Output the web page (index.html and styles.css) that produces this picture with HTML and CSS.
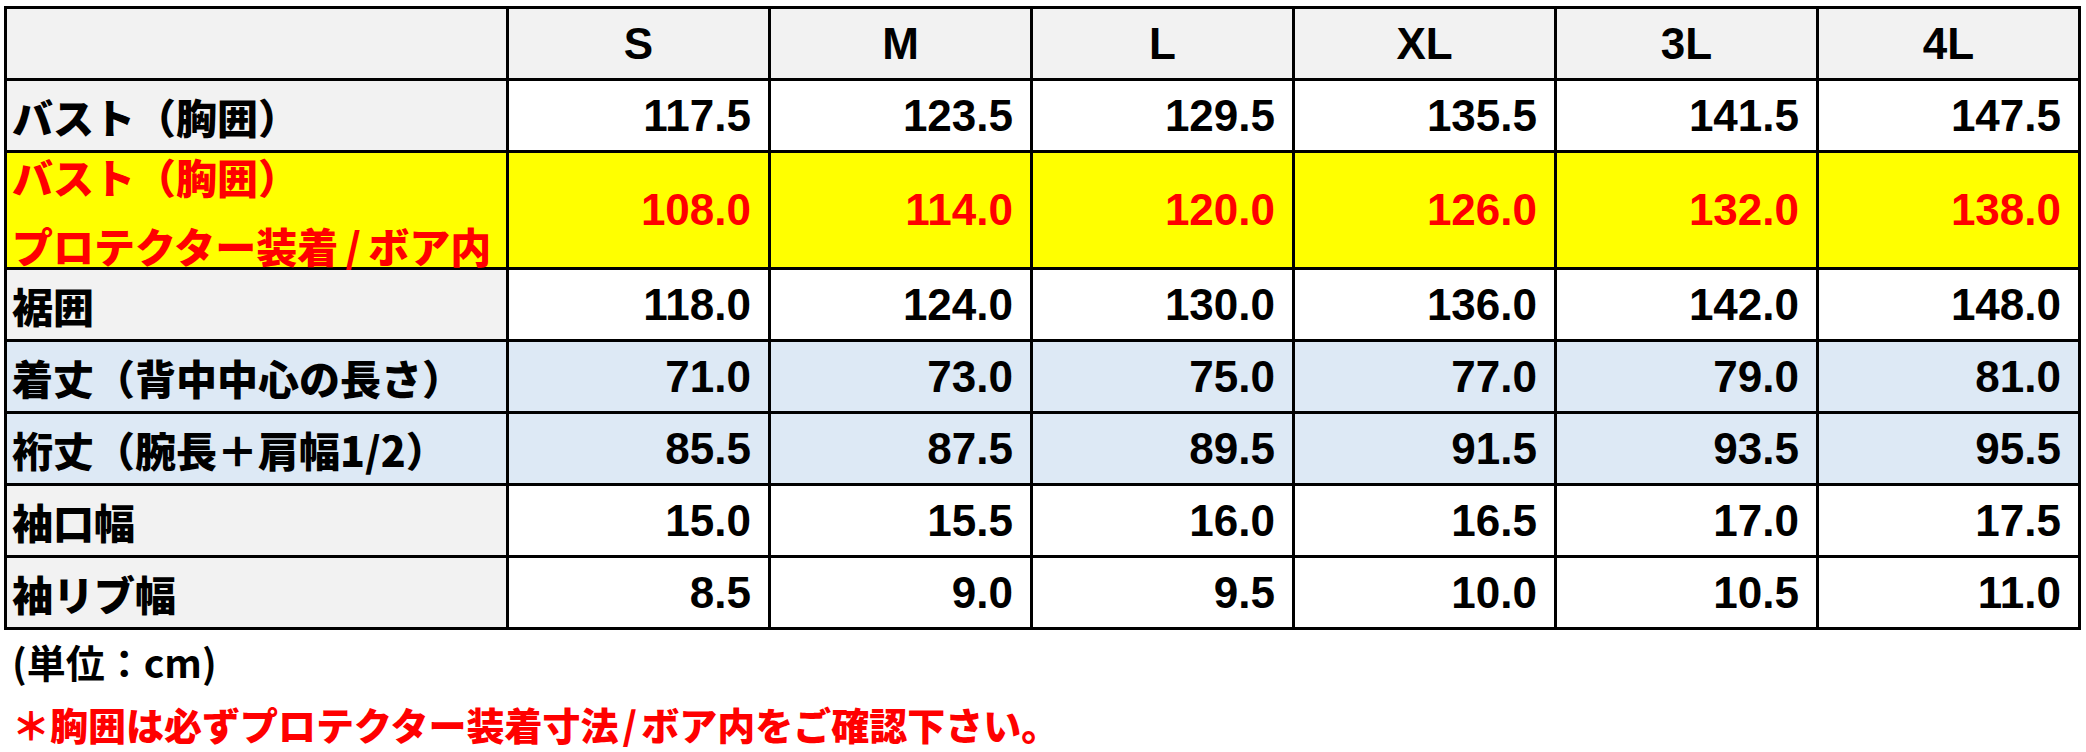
FILE: index.html
```html
<!DOCTYPE html>
<html lang="ja">
<head>
<meta charset="utf-8">
<title>サイズ表</title>
<link rel="stylesheet" href="styles.css">
</head>
<body>
<div class="table">
  <div class="row head">
    <div class="cell label"></div>
    <div class="cell size">S</div>
    <div class="cell size">M</div>
    <div class="cell size">L</div>
    <div class="cell size">XL</div>
    <div class="cell size">3L</div>
    <div class="cell size">4L</div>
  </div>
  <div class="row">
    <div class="cell label">バスト（胸囲）</div>
    <div class="cell num">117.5</div>
    <div class="cell num">123.5</div>
    <div class="cell num">129.5</div>
    <div class="cell num">135.5</div>
    <div class="cell num">141.5</div>
    <div class="cell num">147.5</div>
  </div>
  <div class="row tall yellow">
    <div class="cell label two">
      <span class="line">バスト（胸囲）</span>
      <span class="line">プロテクター装着<span class="sl">/</span>ボア内</span>
    </div>
    <div class="cell num">108.0</div>
    <div class="cell num">114.0</div>
    <div class="cell num">120.0</div>
    <div class="cell num">126.0</div>
    <div class="cell num">132.0</div>
    <div class="cell num">138.0</div>
  </div>
  <div class="row">
    <div class="cell label">裾囲</div>
    <div class="cell num">118.0</div>
    <div class="cell num">124.0</div>
    <div class="cell num">130.0</div>
    <div class="cell num">136.0</div>
    <div class="cell num">142.0</div>
    <div class="cell num">148.0</div>
  </div>
  <div class="row blue">
    <div class="cell label">着丈（背中中心の長さ）</div>
    <div class="cell num">71.0</div>
    <div class="cell num">73.0</div>
    <div class="cell num">75.0</div>
    <div class="cell num">77.0</div>
    <div class="cell num">79.0</div>
    <div class="cell num">81.0</div>
  </div>
  <div class="row blue">
    <div class="cell label">裄丈（腕長＋肩幅1/2）</div>
    <div class="cell num">85.5</div>
    <div class="cell num">87.5</div>
    <div class="cell num">89.5</div>
    <div class="cell num">91.5</div>
    <div class="cell num">93.5</div>
    <div class="cell num">95.5</div>
  </div>
  <div class="row">
    <div class="cell label">袖口幅</div>
    <div class="cell num">15.0</div>
    <div class="cell num">15.5</div>
    <div class="cell num">16.0</div>
    <div class="cell num">16.5</div>
    <div class="cell num">17.0</div>
    <div class="cell num">17.5</div>
  </div>
  <div class="row">
    <div class="cell label">袖リブ幅</div>
    <div class="cell num">8.5</div>
    <div class="cell num">9.0</div>
    <div class="cell num">9.5</div>
    <div class="cell num">10.0</div>
    <div class="cell num">10.5</div>
    <div class="cell num">11.0</div>
  </div>
</div>
<div class="notes">
  <p class="unit">(単位：cm)</p>
  <p class="warn">＊胸囲は必ずプロテクター装着寸法<span class="sl-s">/</span>ボア内をご確認下さい。</p>
</div>
</body>
</html>
```
FILE: styles.css
```css
html, body {
  margin: 0;
  padding: 0;
  background: #ffffff;
}

body {
  font-family: "Noto Sans CJK JP", "Noto Sans", sans-serif;
  font-weight: 700;
  color: #000000;
}

.table {
  display: flex;
  flex-direction: column;
  gap: 3px;
  background: #000000;
  padding: 3px;
  width: 2077px;
  margin: 6px 0 0 4px;
  box-sizing: border-box;
}

.row {
  display: grid;
  grid-template-columns: 499px repeat(6, 1fr);
  gap: 3px;
  height: 69px;
}

.row.tall {
  height: 114px;
}

.cell {
  display: flex;
  align-items: center;
  background: #ffffff;
  overflow: visible;
  white-space: nowrap;
}

.cell.label {
  background: #f2f2f2;
  padding-left: 5px;
  font-family: "Noto Sans CJK JP", sans-serif;
  font-size: 41px;
  font-weight: 900;
}

.head .cell {
  background: #f2f2f2;
}

.cell.size {
  justify-content: center;
  font-family: "Liberation Sans", Arial, sans-serif;
  font-size: 44px;
  font-weight: 700;
}

.cell.num {
  justify-content: flex-end;
  padding-right: 17px;
  font-family: "Liberation Sans", Arial, sans-serif;
  font-size: 44px;
  font-weight: 700;
}

.yellow .cell {
  background: #ffff00;
  color: #ff0000;
}

.blue .cell {
  background: #dde9f5;
}

.cell.two {
  flex-direction: column;
  align-items: flex-start;
  justify-content: center;
  gap: 29px;
}

.cell.two .line {
  line-height: 40px;
  display: block;
}

.sl {
  padding: 0 7px;
}

.sl-s {
  padding: 0 4px;
}

.notes {
  padding-left: 12px;
}

.notes p {
  margin: 0;
}

.unit {
  font-size: 39px;
  line-height: 62px;
}

.warn {
  color: #ff0000;
  font-size: 38px;
  font-weight: 900;
  line-height: 64px;
}
```
